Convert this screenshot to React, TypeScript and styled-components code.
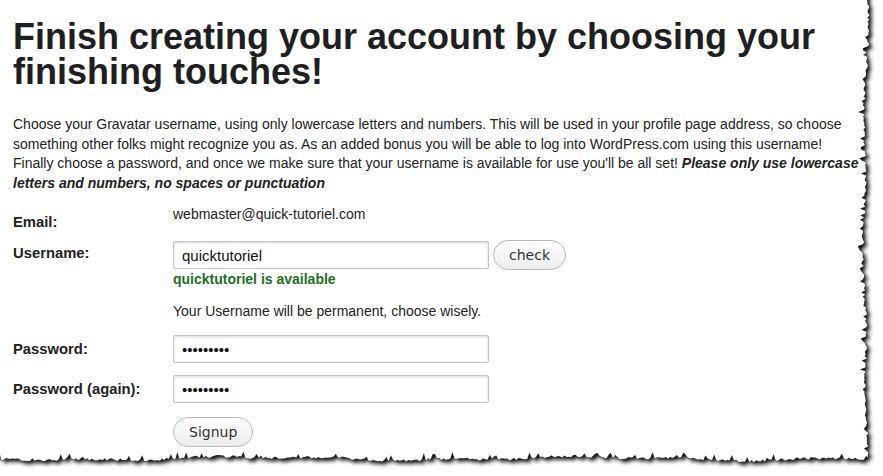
import React from "react";
import styled, { createGlobalStyle } from "styled-components";

const GlobalStyle = createGlobalStyle`
  html, body { margin: 0; padding: 0; background: #fff; }
  body { font-family: "Liberation Sans", Arial, Helvetica, sans-serif; color: #222; }
`;

const Page = styled.div`
  position: relative;
  width: 883px;
  height: 476px;
  overflow: hidden;
  box-sizing: border-box;
  padding: 19px 0 0 13px;
  background: #fff;
`;

const Title = styled.h1`
  margin: 0;
  font-size: 36px;
  line-height: 35px;
  font-weight: bold;
  color: #1f1f23;
`;

const Intro = styled.p`
  margin: 26px 0 0;
  width: 848px;
  font-size: 14px;
  line-height: 19.6px;
  color: #222;
`;

const Form = styled.form`
  margin-top: 12px;
  display: flex;
  flex-direction: column;
`;

const Row = styled.div<{ $gap: number }>`
  display: flex;
  align-items: flex-start;
  margin-top: ${(p) => p.$gap}px;
`;

const Label = styled.label<{ $offset: number }>`
  width: 160px;
  flex: none;
  padding-top: ${(p) => p.$offset}px;
  font-weight: bold;
  font-size: 14.8px;
  line-height: 18px;
  color: #222;
`;

const Field = styled.div`
  display: flex;
  flex-direction: column;
  align-items: flex-start;
`;

const Value = styled.div`
  font-size: 14px;
  line-height: 18px;
  color: #222;
`;

const InputLine = styled.div`
  display: flex;
  align-items: center;
  gap: 4px;
`;

const TextInput = styled.input`
  width: 316px;
  height: 28px;
  box-sizing: border-box;
  margin: 0;
  border: 1px solid #c4c4c4;
  border-radius: 2px;
  padding: 0 8px;
  font-family: "Liberation Sans", Arial, sans-serif;
  font-size: 15px;
  color: #111;
  background: #fff;
  box-shadow: inset 0 1px 3px rgba(0, 0, 0, 0.16);
  outline: none;
`;

const PillButton = styled.button<{ $indent?: number }>`
  height: 30px;
  margin: 0 0 0 ${(p) => p.$indent ?? 0}px;
  padding: 0 15px;
  box-sizing: border-box;
  border: 1px solid #b9b9b9;
  border-radius: 15px;
  background: linear-gradient(#ffffff, #ececec);
  font-family: "DejaVu Sans", "Lucida Grande", sans-serif;
  font-size: 14px;
  color: #333;
  cursor: pointer;
  align-self: flex-start;
`;

const Available = styled.div`
  font-size: 14px;
  line-height: 18px;
  font-weight: bold;
  color: #217021;
`;

const Note = styled.div`
  margin-top: 14px;
  font-size: 14px;
  line-height: 18px;
  color: #222;
`;

const Overlay = styled.svg`
  position: absolute;
  left: 0;
  top: 0;
  pointer-events: none;
`;

function makeRng(seed: number) {
  let s = seed;
  return () => {
    s = (s * 16807) % 2147483647;
    return (s - 1) / 2147483646;
  };
}

function buildPaper(): string {
  const rand = makeRng(12345);
  const pts: [number, number][] = [[-20, -20]];
  for (let y = -20; y <= 459; y += 2.2) {
    const t = Math.max(0, Math.min(1, y / 460));
    const base = 868 - Math.sin(Math.PI * t) * 4 + Math.sin(y / 23) * 1.3;
    let j = (rand() - 0.5) * 2.6;
    if (rand() < 0.16) j -= 2 + rand() * 3.5;
    pts.push([base + j, y]);
  }
  for (let x = 866; x >= -20; x -= 2.2) {
    const base = 458.5 + Math.sin(x / 53) * 1.6 + Math.sin(x / 19) * 0.9;
    let j = (rand() - 0.5) * 2.6;
    if (rand() < 0.18) j -= 2 + rand() * 4.5;
    pts.push([x, base + j]);
  }
  return "M" + pts.map(([a, b]) => `${a.toFixed(1)} ${b.toFixed(1)}`).join(" L") + " Z";
}

const paperPath = buildPaper();

const TornEdge: React.FC = () => (
  <Overlay width={883} height={476} viewBox="0 0 883 476">
    <defs>
      <filter id="tornBlur" filterUnits="userSpaceOnUse" x={-50} y={-50} width={1000} height={600}>
        <feGaussianBlur stdDeviation={2.1} />
      </filter>
      <mask id="tornOutside" maskUnits="userSpaceOnUse" x={0} y={0} width={883} height={476}>
        <rect x={0} y={0} width={883} height={476} fill="#fff" />
        <path d={paperPath} fill="#000" />
      </mask>
    </defs>
    <g mask="url(#tornOutside)">
      <path d={paperPath} fill="#000" transform="translate(3 3)" filter="url(#tornBlur)" />
      <path d={paperPath} fill="none" stroke="#3a3a3a" strokeWidth={1.4} strokeOpacity={0.8} />
    </g>
  </Overlay>
);

export default function App() {
  return (
    <>
      <GlobalStyle />
      <Page>
        <Title>Finish creating your account by choosing your finishing touches!</Title>
        <Intro>
          Choose your Gravatar username, using only lowercase letters and numbers. This will be used in your
          profile page address, so choose something other folks might recognize you as. As an added bonus you
          will be able to log into WordPress.com using this username! Finally choose a password, and once we
          make sure that your username is available for use you'll be all set!{" "}
          <b>
            <i>Please only use lowercase letters and numbers, no spaces or punctuation</i>
          </b>
        </Intro>
        <Form onSubmit={(e) => e.preventDefault()}>
          <Row $gap={0}>
            <Label $offset={8}>Email:</Label>
            <Field>
              <Value>webmaster@quick-tutoriel.com</Value>
            </Field>
          </Row>
          <Row $gap={9}>
            <Label $offset={4}>Username:</Label>
            <Field>
              <InputLine>
                <TextInput type="text" defaultValue="quicktutoriel" />
                <PillButton type="button">check</PillButton>
              </InputLine>
              <Available>quicktutoriel is available</Available>
              <Note>Your Username will be permanent, choose wisely.</Note>
            </Field>
          </Row>
          <Row $gap={15}>
            <Label $offset={5}>Password:</Label>
            <Field>
              <TextInput type="password" defaultValue="abcdefghi" />
            </Field>
          </Row>
          <Row $gap={12}>
            <Label $offset={5}>Password (again):</Label>
            <Field>
              <TextInput type="password" defaultValue="abcdefghi" />
            </Field>
          </Row>
          <Row $gap={14}>
            <PillButton type="submit" $indent={160}>
              Signup
            </PillButton>
          </Row>
        </Form>
        <TornEdge />
      </Page>
    </>
  );
}
